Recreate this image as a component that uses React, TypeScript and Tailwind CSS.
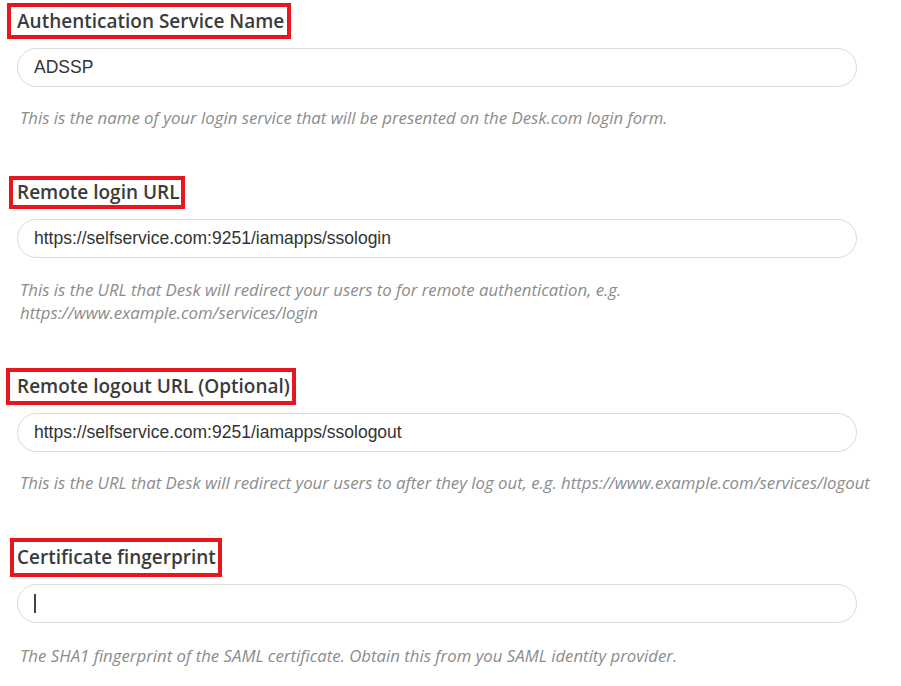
type FieldProps = {
  label: string;
  value?: string;
  caret?: boolean;
  help: React.ReactNode;
  boxClass: string;
  inputClass: string;
  helpClass: string;
};

function Field({ label, value, caret, help, boxClass, inputClass, helpClass }: FieldProps) {
  return (
    <section>
      <div className={`inline-block border-4 border-[#e8161f] font-semibold text-[19px] text-[#3b3b3b] ${boxClass}`}>
        {label}
      </div>
      <div
        className={`h-[39px] w-[840px] rounded-full border border-[#dadada] bg-white pl-4 flex items-center text-[17.5px] text-[#333] ${inputClass}`}
        style={{ fontFamily: '"Liberation Sans", Arial, sans-serif' }}
      >
        {value}
        {caret && <span className="block w-[2px] h-[19px] bg-[#444]" />}
      </div>
      <p className={`pl-[3px] italic text-[16.8px] leading-[23px] text-[#8c8c8c] ${helpClass}`}>{help}</p>
    </section>
  );
}

export default function App() {
  return (
    <main
      className="min-h-screen bg-white px-[17px] pt-[3px]"
      style={{ fontFamily: '"Open Sans", "Noto Sans", sans-serif' }}
    >
      <Field
        label="Authentication Service Name"
        value="ADSSP"
        boxClass="-ml-[10px] pl-[6px] pr-[3px] py-[1px] leading-[26px]"
        inputClass="mt-[9px]"
        helpClass="mt-[19px] mb-[47px]"
        help="This is the name of your login service that will be presented on the Desk.com login form."
      />
      <Field
        label="Remote login URL"
        value="https://selfservice.com:9251/iamapps/ssologin"
        boxClass="-ml-[8px] pl-[4px] pr-[1px] leading-[25px]"
        inputClass="mt-[10px]"
        helpClass="mt-[20px] mb-[44px] max-w-[860px]"
        help={
          <>
            This is the URL that Desk will redirect your users to for remote authentication, e.g.
            <br />
            https://www.example.com/services/login
          </>
        }
      />
      <Field
        label="Remote logout URL (Optional)"
        value="https://selfservice.com:9251/iamapps/ssologout"
        boxClass="-ml-[11px] pl-[7px] pr-[2px] py-[1px] leading-[27px]"
        inputClass="mt-[8px]"
        helpClass="mt-[19px] mb-[44px] whitespace-nowrap"
        help="This is the URL that Desk will redirect your users to after they log out, e.g. https://www.example.com/services/logout"
      />
      <Field
        label="Certificate fingerprint"
        caret
        boxClass="-ml-[7px] pl-[3px] pr-[2px] py-[2px] leading-[27px]"
        inputClass="mt-[7px]"
        helpClass="mt-[21px]"
        help="The SHA1 fingerprint of the SAML certificate. Obtain this from you SAML identity provider."
      />
    </main>
  );
}
